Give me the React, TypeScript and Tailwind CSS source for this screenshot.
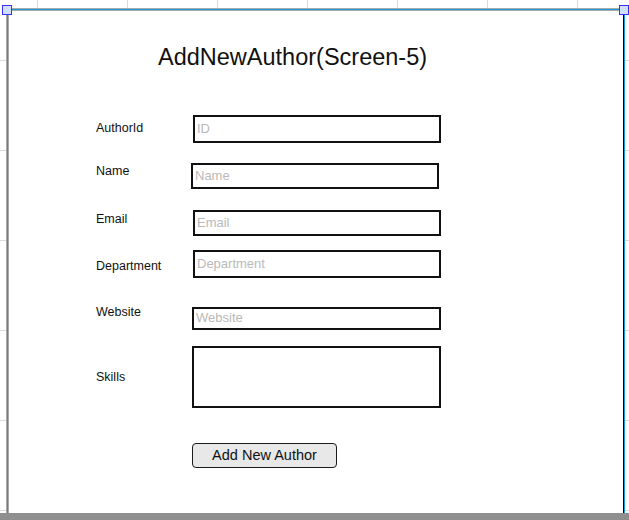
const fields = [
  { label: 'AuthorId', placeholder: 'ID', row: 'mt-[46px]', lbl: 'pt-[7px]', box: 'ml-[97px] w-[248px] h-[28px]' },
  { label: 'Name', placeholder: 'Name', row: 'mt-[20px]', lbl: 'pt-[2px]', box: 'ml-[95px] w-[248px] h-[26px]' },
  { label: 'Email', placeholder: 'Email', row: 'mt-[21px]', lbl: 'pt-[3px]', box: 'ml-[97px] w-[248px] h-[26px]' },
  { label: 'Department', placeholder: 'Department', row: 'mt-[14px]', lbl: 'pt-[10px]', box: 'ml-[97px] w-[248px] h-[28px]' },
  { label: 'Website', placeholder: 'Website', row: 'mt-[27px]', lbl: 'pt-[1px]', box: 'ml-[96px] mt-[2px] w-[249px] h-[23px]' },
];

function Handle({ pos }: { pos: string }) {
  return <div className={`absolute ${pos} size-[10px] bg-[#cfe0ff] border border-[#3b30ff]`} />;
}

export default function App() {
  return (
    <div className="w-[629px] h-[520px] overflow-hidden flex flex-col bg-white bg-[linear-gradient(to_right,#dadada_1px,transparent_1px),linear-gradient(to_bottom,#dadada_1px,transparent_1px)] bg-size-[90px_90px] bg-position-[37px_60px] font-['Liberation_Sans',Arial,sans-serif] text-[#111]">
      <div className="relative h-[513px] shrink-0 overflow-hidden">
        {/* diagram frame */}
        <div className="mt-[8px] ml-[6px] w-[619px] h-[505px] border-l border-t border-r border-l-[#a9a9a9] border-t-[#a9a9a9] border-r-[#1b9ad6]">
          <div className="h-full border-l border-t border-r border-l-[#1b9ad6] border-t-[#1b9ad6] border-r-black">
            <div className="h-full bg-white border-l border-t border-[#a9a9a9]">
              <h1 className="mt-[35px] pl-[149px] text-[23.5px] leading-[23px] font-normal">AddNewAuthor(Screen-5)</h1>

              <div className="pl-[87px] flex flex-col text-[12.5px] leading-[13px]">
                {fields.map((f) => (
                  <div key={f.label} className={`flex items-start ${f.row}`}>
                    <div className={`w-0 whitespace-nowrap ${f.lbl}`}>{f.label}</div>
                    <div className={`${f.box} border-2 border-[#111] bg-white flex items-center pl-[2px] pb-[2px] text-[13px] text-[#b9b9b9]`}>
                      {f.placeholder}
                    </div>
                  </div>
                ))}
                <div className="flex items-start mt-[16px]">
                  <div className="w-0 whitespace-nowrap pt-[25px]">Skills</div>
                  <div className="ml-[96px] w-[249px] h-[62px] border-2 border-[#111] bg-white" />
                </div>
                <button className="mt-[35px] ml-[96px] w-[145px] h-[25px] rounded-[4px] border-[1.5px] border-[#1a1a1a] bg-[#e8e8e8] text-[14.5px] leading-none text-[#111] flex items-center justify-center">
                  Add New Author
                </button>
              </div>
            </div>
          </div>
        </div>
        <Handle pos="left-[2px] top-[5px]" />
        <Handle pos="left-[619px] top-[5px]" />
      </div>
      <div className="h-[7px] shrink-0 bg-[#8f8f8f]" />
    </div>
  );
}
